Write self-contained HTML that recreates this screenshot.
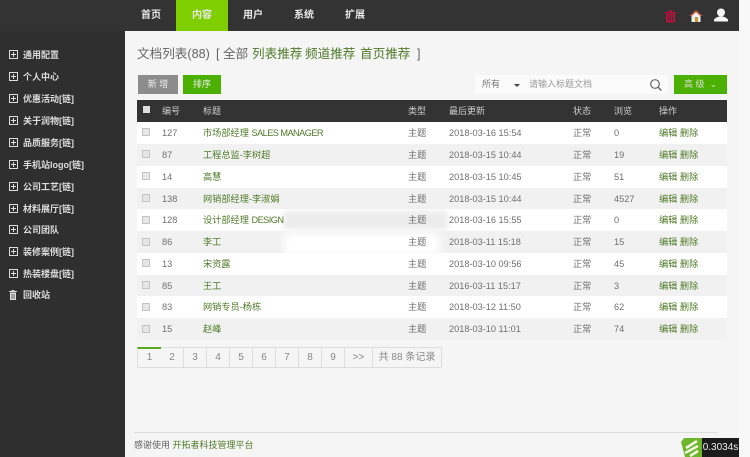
<!DOCTYPE html>
<html lang="zh"><head><meta charset="utf-8">
<style>
html,body{margin:0;padding:0}
body{width:750px;height:457px;overflow:hidden;position:relative;background:#f5f5f5;font-family:"Liberation Sans","Noto Sans CJK SC",sans-serif;font-size:9px;color:#666;filter:blur(.35px)}
.a{position:absolute;white-space:nowrap}
.top{left:0;top:0;width:739px;height:31px;background:#333}
.side{left:0;top:31px;width:125px;height:426px;background:#2f2f2f}
.sb{left:739px;top:0;width:11px;height:457px;background:#f8f8f8}
.nav{top:0;height:31px;line-height:32px;color:#e8e8e8;font-size:10px;font-weight:bold;text-align:center;width:52px}
.m{left:23px;color:#ddd;font-size:9px;font-weight:bold;line-height:12px}
.ic{left:9px;width:7px;height:7px;border:1px solid #ddd;box-sizing:content-box}
.ic:before{content:"";position:absolute;left:1px;top:3px;width:5px;height:1px;background:#ddd}
.ic:after{content:"";position:absolute;left:3px;top:1px;width:1px;height:5px;background:#ddd}
.r{left:137px;width:590px;height:22px}
.t{line-height:22px;color:#707070;font-size:9.2px}
.t.g{color:#4f7a28}
.g{color:#4f7a28}
.h{top:100px;line-height:22px;color:#ccc}
.cb{left:142px;width:6px;height:6px;background:#e6e6e6;border:1px solid #c4c4c4}
.pg{top:347px;height:19px;background:#f5f5f5;border:1px solid #ddd;border-left:0;line-height:19px;text-align:center;color:#888;font-size:10px;box-sizing:content-box}
.ti{top:44px;font-size:12.6px;line-height:20px;color:#666}
.l{letter-spacing:-.55px}
</style></head><body>
<div class="a top"></div>
<div class="a side"></div>
<div class="a sb"></div>
<div class="a nav" style="left:125px">首页</div>
<div class="a nav" style="left:176px;background:#7fce00;width:52px">内容</div>
<div class="a nav" style="left:227px">用户</div>
<div class="a nav" style="left:278px">系统</div>
<div class="a nav" style="left:329px">扩展</div>

<svg class="a" style="left:664px;top:10px" width="13" height="13" viewBox="0 0 13 13"><path d="M1 2h11v1.500H1zM4.500 .5h4V2h-4zM2 4h9v8.500H2z" fill="#b4123c"/><path d="M4.500 5v6M6.500 5v6M8.500 5v6" stroke="#333" stroke-width=".8"/></svg>
<svg class="a" style="left:689px;top:9px" width="14" height="14" viewBox="0 0 14 14"><path d="M7 1 .5 7H2.500v6h9V7h2z" fill="#eee"/><path d="M7 1 .5 7h2L7 3l4.500 4h2z" fill="#b84a35"/><rect x="6" y="8" width="3" height="5" fill="#c9962f"/></svg>
<svg class="a" style="left:714px;top:8px" width="14" height="14" viewBox="0 0 14 14"><circle cx="7" cy="4.500" r="4" fill="#f7f7f7"/><path d="M0 13.500V12c0-1.500 3.500-3 5-3.500h4c1.500.5 5 2 5 3.500v1.500z" fill="#f7f7f7"/></svg>

<div class="a ic" style="top:50px"></div><div class="a m" style="top:49px">通用配置</div>
<div class="a ic" style="top:72px"></div><div class="a m" style="top:71px">个人中心</div>
<div class="a ic" style="top:94px"></div><div class="a m" style="top:93px">优惠活动[链]</div>
<div class="a ic" style="top:116px"></div><div class="a m" style="top:115px">关于润物[链]</div>
<div class="a ic" style="top:138px"></div><div class="a m" style="top:137px">品质服务[链]</div>
<div class="a ic" style="top:160px"></div><div class="a m" style="top:159px">手机站logo[链]</div>
<div class="a ic" style="top:182px"></div><div class="a m" style="top:181px">公司工艺[链]</div>
<div class="a ic" style="top:204px"></div><div class="a m" style="top:203px">材料展厅[链]</div>
<div class="a ic" style="top:225px"></div><div class="a m" style="top:224px">公司团队</div>
<div class="a ic" style="top:247px"></div><div class="a m" style="top:246px">装修案例[链]</div>
<div class="a ic" style="top:269px"></div><div class="a m" style="top:268px">热装楼盘[链]</div>
<svg class="a" style="left:9px;top:290px" width="8" height="10" viewBox="0 0 8 10"><path d="M0 1h8v1H0zM2.500 0h3v1h-3zM1 2.500h6V10H1z" fill="#ddd"/><path d="M3 4v5M5 4v5" stroke="#2f2f2f" stroke-width=".7"/></svg>
<div class="a m" style="top:289px">回收站</div>

<div class="a ti" style="left:137px">文档列表(88)</div>
<div class="a ti" style="left:216px">[</div>
<div class="a ti" style="left:223px">全部</div>
<div class="a ti g" style="left:252px;color:#4f7a28">列表推荐</div>
<div class="a ti g" style="left:305px;color:#4f7a28">频道推荐</div>
<div class="a ti g" style="left:360px;color:#4f7a28">首页推荐</div>
<div class="a ti" style="left:417px">]</div>

<div class="a" style="left:138px;top:75px;width:40px;height:19px;background:#8c8c8c;color:#eee;text-align:center;line-height:19px">新 增</div>
<div class="a" style="left:183px;top:75px;width:38px;height:19px;background:#4cb000;color:#eee;text-align:center;line-height:19px">排序</div>

<div class="a" style="left:475px;top:75px;width:193px;height:19px;background:#fbfbfb"></div>
<div class="a" style="left:482px;top:75px;line-height:19px;color:#777">所有</div>
<div class="a" style="left:514px;top:84px;border:3px solid transparent;border-top-color:#444;border-bottom:0"></div>
<div class="a" style="left:529px;top:75px;line-height:19px;color:#999">请输入标题文档</div>
<svg class="a" style="left:649px;top:78px" width="14" height="14" viewBox="0 0 14 14"><circle cx="6" cy="6" r="4.300" fill="none" stroke="#666" stroke-width="1.200"/><path d="M9.200 9.200 12.500 12.500" stroke="#666" stroke-width="1.400"/></svg>
<div class="a" style="left:674px;top:75px;width:53px;height:19px;background:#4cb000;color:#ddd;text-align:center;line-height:19px">高 级 &nbsp;⌄</div>

<div class="a" style="left:137px;top:100px;width:590px;height:22px;background:#333"></div>
<div class="a" style="left:143px;top:106px;width:7px;height:7px;background:#ddd"></div>
<div class="a h" style="left:162px">编号</div>
<div class="a h" style="left:203px">标题</div>
<div class="a h" style="left:408px">类型</div>
<div class="a h" style="left:449px">最后更新</div>
<div class="a h" style="left:573px">状态</div>
<div class="a h" style="left:614px">浏览</div>
<div class="a h" style="left:659px">操作</div>

<div class="a r" style="top:122px;background:#fff"></div>
<div class="a r" style="top:144px;background:#f1f1f1"></div>
<div class="a r" style="top:166px;background:#fff"></div>
<div class="a r" style="top:188px;background:#f1f1f1"></div>
<div class="a r" style="top:209px;background:#fff"></div>
<div class="a r" style="top:231px;background:#f1f1f1"></div>
<div class="a r" style="top:253px;background:#fff"></div>
<div class="a r" style="top:275px;background:#f1f1f1"></div>
<div class="a r" style="top:296px;background:#fff"></div>
<div class="a r" style="top:318px;background:#f1f1f1"></div>

<div class="a" style="left:283px;top:211px;width:165px;height:19px;background:#ececec;filter:blur(3px)"></div>
<div class="a" style="left:284px;top:233px;width:155px;height:22px;background:#fff;filter:blur(4px)"></div>

<div class="a cb" style="top:128px"></div><div class="a t" style="left:162px;top:122px">127</div><div class="a t g" style="left:203px;top:122px">市场部经理 <span class="l">SALES MANAGER</span></div><div class="a t" style="left:408px;top:122px">主题</div><div class="a t" style="left:449px;top:122px">2018-03-16 15:54</div><div class="a t" style="left:573px;top:122px">正常</div><div class="a t" style="left:614px;top:122px">0</div><div class="a t g" style="left:659px;top:122px">编辑 删除</div>
<div class="a cb" style="top:150px"></div><div class="a t" style="left:162px;top:144px">87</div><div class="a t g" style="left:203px;top:144px">工程总监-李树超</div><div class="a t" style="left:408px;top:144px">主题</div><div class="a t" style="left:449px;top:144px">2018-03-15 10:44</div><div class="a t" style="left:573px;top:144px">正常</div><div class="a t" style="left:614px;top:144px">19</div><div class="a t g" style="left:659px;top:144px">编辑 删除</div>
<div class="a cb" style="top:172px"></div><div class="a t" style="left:162px;top:166px">14</div><div class="a t g" style="left:203px;top:166px">高慧</div><div class="a t" style="left:408px;top:166px">主题</div><div class="a t" style="left:449px;top:166px">2018-03-15 10:45</div><div class="a t" style="left:573px;top:166px">正常</div><div class="a t" style="left:614px;top:166px">51</div><div class="a t g" style="left:659px;top:166px">编辑 删除</div>
<div class="a cb" style="top:194px"></div><div class="a t" style="left:162px;top:188px">138</div><div class="a t g" style="left:203px;top:188px">网销部经理-李淑娟</div><div class="a t" style="left:408px;top:188px">主题</div><div class="a t" style="left:449px;top:188px">2018-03-15 10:44</div><div class="a t" style="left:573px;top:188px">正常</div><div class="a t" style="left:614px;top:188px">4527</div><div class="a t g" style="left:659px;top:188px">编辑 删除</div>
<div class="a cb" style="top:216px"></div><div class="a t" style="left:162px;top:209px">128</div><div class="a t g" style="left:203px;top:209px">设计部经理 <span class="l">DESIGN</span></div><div class="a t" style="left:408px;top:209px">主题</div><div class="a t" style="left:449px;top:209px">2018-03-16 15:55</div><div class="a t" style="left:573px;top:209px">正常</div><div class="a t" style="left:614px;top:209px">0</div><div class="a t g" style="left:659px;top:209px">编辑 删除</div>
<div class="a cb" style="top:238px"></div><div class="a t" style="left:162px;top:231px">86</div><div class="a t g" style="left:203px;top:231px">李工</div><div class="a t" style="left:408px;top:231px">主题</div><div class="a t" style="left:449px;top:231px">2018-03-11 15:18</div><div class="a t" style="left:573px;top:231px">正常</div><div class="a t" style="left:614px;top:231px">15</div><div class="a t g" style="left:659px;top:231px">编辑 删除</div>
<div class="a cb" style="top:259px"></div><div class="a t" style="left:162px;top:253px">13</div><div class="a t g" style="left:203px;top:253px">宋资露</div><div class="a t" style="left:408px;top:253px">主题</div><div class="a t" style="left:449px;top:253px">2018-03-10 09:56</div><div class="a t" style="left:573px;top:253px">正常</div><div class="a t" style="left:614px;top:253px">45</div><div class="a t g" style="left:659px;top:253px">编辑 删除</div>
<div class="a cb" style="top:281px"></div><div class="a t" style="left:162px;top:275px">85</div><div class="a t g" style="left:203px;top:275px">王工</div><div class="a t" style="left:408px;top:275px">主题</div><div class="a t" style="left:449px;top:275px">2016-03-11 15:17</div><div class="a t" style="left:573px;top:275px">正常</div><div class="a t" style="left:614px;top:275px">3</div><div class="a t g" style="left:659px;top:275px">编辑 删除</div>
<div class="a cb" style="top:303px"></div><div class="a t" style="left:162px;top:296px">83</div><div class="a t g" style="left:203px;top:296px">网销专员-杨栋</div><div class="a t" style="left:408px;top:296px">主题</div><div class="a t" style="left:449px;top:296px">2018-03-12 11:50</div><div class="a t" style="left:573px;top:296px">正常</div><div class="a t" style="left:614px;top:296px">62</div><div class="a t g" style="left:659px;top:296px">编辑 删除</div>
<div class="a cb" style="top:325px"></div><div class="a t" style="left:162px;top:318px">15</div><div class="a t g" style="left:203px;top:318px">赵峰</div><div class="a t" style="left:408px;top:318px">主题</div><div class="a t" style="left:449px;top:318px">2018-03-10 11:01</div><div class="a t" style="left:573px;top:318px">正常</div><div class="a t" style="left:614px;top:318px">74</div><div class="a t g" style="left:659px;top:318px">编辑 删除</div>

<div class="a pg" style="left:137px;width:23px;border-left:1px solid #ddd;border-top:2px solid #5aa820;height:18px;line-height:18px">1</div>
<div class="a pg" style="left:161px;width:22px">2</div>
<div class="a pg" style="left:184px;width:22px">3</div>
<div class="a pg" style="left:207px;width:22px">4</div>
<div class="a pg" style="left:230px;width:22px">5</div>
<div class="a pg" style="left:253px;width:22px">6</div>
<div class="a pg" style="left:276px;width:22px">7</div>
<div class="a pg" style="left:299px;width:22px">8</div>
<div class="a pg" style="left:322px;width:22px">9</div>
<div class="a pg" style="left:345px;width:27px">&gt;&gt;</div>
<div class="a pg" style="left:373px;width:68px">共 88 条记录</div>

<div class="a" style="left:134px;top:432px;width:584px;height:1px;background:#ddd"></div>
<div class="a" style="left:134px;top:439px;line-height:13px;color:#666">感谢使用 <span class="g">开拓者科技管理平台</span></div>

<svg class="a" style="left:681px;top:438px" width="21" height="19" viewBox="0 0 21 19"><path d="M3 0H21V19H4L0 4z" fill="#6fb52c"/><path d="M5 10 16 3M4 15 17 8M9 18 17 13" stroke="#eef5e0" stroke-width="2.600"/></svg>
<div class="a" style="left:702px;top:438px;width:37px;height:19px;background:#1c1c1c;color:#eee;text-align:center;line-height:19px;font-size:10px">0.3034s</div>
</body></html>
